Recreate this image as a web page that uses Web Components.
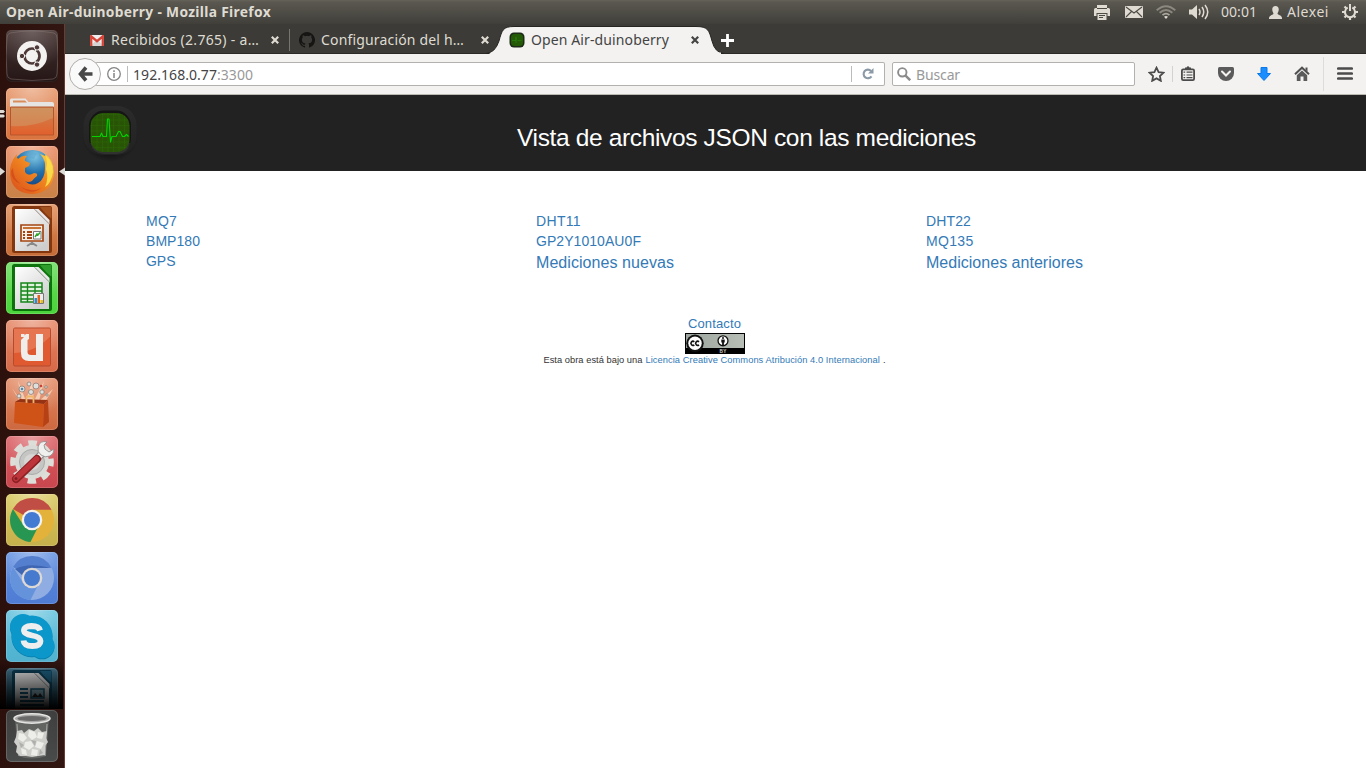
<!DOCTYPE html>
<html lang="es">
<head>
<meta charset="utf-8">
<title>Open Air-duinoberry</title>
<style>
html,body{margin:0;height:100%;overflow:hidden;background:#fff}
body{font-family:"Noto Sans","Open Sans",sans-serif}
</style>
</head>
<body>
<desk-top></desk-top>
<script>
const ICONS = {
printer:[20,20,`<g fill="#dfdbd2"><rect x="5" y="3" width="10" height="3"/><path d="M2 7.500q0-1.500 1.500-1.500h13q1.500 0 1.500 1.500v6.500h-2.500v-3h-11v3h-2.500z"/><path d="M5.500 12h9v6h-9z"/></g><path d="M5 6.500h10M7 13.500h6M7 15.500h4" stroke="#4a4943"/>`],
mail:[18,12,`<rect width="18" height="12" rx="1" fill="#dfdbd2"/><path d="M1 1l8 6 8-6M1 11l5.500-5.500M17 11l-5.500-5.500" fill="none" stroke="#4d4b45" stroke-width="1.100"/>`],
wifi:[20,16,`<g fill="none" stroke="#8b887f" stroke-width="1.800"><path d="M.7 6.300Q10-1.800 19.300 6.300"/><path d="M3.600 8.800Q10 3.200 16.400 8.800"/><path d="M6.500 11.200Q10 8 13.500 11.200" stroke="#aaa79d"/></g><path d="M8 12.800q2-1.500 4 0l-2 2.200z" fill="#dfdbd2"/>`],
sound:[20,16,`<path d="M0 5.500h3l5-4.500v14l-5-4.500h-3z" fill="#dfdbd2"/><g fill="none" stroke="#dfdbd2" stroke-width="1.500"><path d="M10 5q2 3 0 6M13 3q3.500 5 0 10M16 1q5.500 7 0 14"/></g>`],
user:[13,13,`<path d="M6.500 0c2.400 0 3.500 1.600 3.200 4-.2 1.800-.9 2.600-1.200 3.600 0 1.600 4.300 1.400 4.500 4.400v1h-13v-1c.2-3 4.500-2.800 4.500-4.400-.3-1-1-1.800-1.200-3.600-.3-2.400.8-4 3.200-4z" fill="#dfdbd2"/>`],
power:[16,16,`<g fill="none" stroke="#dfdbd2"><path d="M5.700 3.700a5 5 0 1 0 4.600 0" stroke-width="2"/><path d="M8 0v7" stroke-width="2"/><path d="M0 8h3M13 8h3M8 13v3M2.500 2.500l2 2M13.500 2.500l-2 2M2.500 13.500l2-2M13.500 13.500l-2-2" stroke-width="2.200"/></g>`],
gmail:[14,11,`<rect width="14" height="11" rx="1" fill="#eee"/><path d="M2 9.500l5-5 5 5v1.500h-10z" fill="#d5d5d5"/><path d="M1.200 11V1.300L7 6.200l5.800-4.900V11" fill="none" stroke="#d54437" stroke-width="2.300"/>`],
github:[16,16,`<path fill="#161514" d="M8 0a8 8 0 0 0-2.530 15.590c.4.070.55-.17.55-.38v-1.490c-2.230.490-2.700-.94-2.700-.94-.36-.92-.89-1.170-.89-1.170-.73-.5.050-.49.050-.49.800.060 1.230.830 1.230.830.710 1.220 1.870.870 2.330.660.070-.52.280-.87.510-1.070-1.780-.2-3.640-.89-3.640-3.950 0-.87.310-1.590.820-2.150-.08-.2-.36-1.020.080-2.120 0 0 .67-.21 2.200.820a7.600 7.600 0 0 1 4 0c1.530-1.040 2.200-.82 2.200-.82.440 1.100.160 1.920.080 2.120.510.560.820 1.270.820 2.150 0 3.070-1.870 3.750-3.650 3.950.290.250.540.730.540 1.480v2.190c0 .210.150.460.550.380A8 8 0 0 0 8 0z"/>`],
close:[8,8,`<path d="M.8.8l6.400 6.400M7.200.8L.8 7.200" stroke="currentColor" stroke-width="2.200"/>`],
plus:[13,13,`<path d="M6.500 0v13M0 6.500h13" stroke="#fff" stroke-width="2.800"/>`],
mini:[16,16,`<rect x=".5" y=".5" width="15" height="15" rx="4.500" fill="#1b2b17"/><rect x="2" y="2" width="12" height="12" rx="3.500" fill="#235a06"/><path d="M3 8.500h4V5v6M8.500 8.500h4" fill="none" stroke="#2a7d10" stroke-width=".8"/>`],
back:[15,16,`<path d="M8 1.500L2.500 8 8 14.500M3 8H14.500" fill="none" stroke="#484848" stroke-width="3.600"/>`],
info:[14,14,`<circle cx="7" cy="7" r="6.300" fill="none" stroke="#848484" stroke-width="1.300"/><path d="M7 6v5M7 3.300v1.600" stroke="#848484" stroke-width="1.500"/>`],
reload:[12,12,`<path d="M9.500 8.300A4.300 4.300 0 1 1 9 2.900" fill="none" stroke="#8b9aa6" stroke-width="2.100"/><path d="M11.500 0v5.500H6z" fill="#8b9aa6"/>`],
search:[14,14,`<circle cx="5.300" cy="5.300" r="4.200" fill="none" stroke="#8b8b8b" stroke-width="1.900"/><path d="M8.300 8.300l4.900 4.900" stroke="#8b8b8b" stroke-width="2.500"/>`],
star:[17,16,`<path d="M8.500 1.700l2.100 4.400 4.900.6-3.600 3.300.9 4.800-4.300-2.400-4.300 2.400.9-4.800-3.600-3.300 4.900-.6z" fill="none" stroke="#4b4b4b" stroke-width="1.800"/>`],
clip:[14,15,`<rect x=".9" y="3.400" width="12.200" height="10.700" rx="1.300" fill="none" stroke="#4b4b4b" stroke-width="1.800"/><path d="M4 3V1.500h1.500Q7-.8 8.500 1.500H10V3z" fill="#4b4b4b"/><path d="M2.500 6.200h1.700M5.500 6.200h6M2.500 9h1.700M5.500 9h6M2.500 11.700h1.700M5.500 11.700h6" stroke="#4b4b4b" stroke-width="1.200"/>`],
pocket:[16,14,`<path d="M1.500 0h13q1.500 0 1.500 1.500V6a8 8 0 0 1-16 0V1.500Q0 0 1.500 0z" fill="#5b5b5b"/><path d="M4 4.500l4 4 4-4" fill="none" stroke="#f4f3f1" stroke-width="2" stroke-linecap="round"/>`],
down:[14,14,`<path d="M4 .5h6v6h3.500L7 13.500.5 6.500H4z" fill="#1a8dff" stroke="#0b78e8"/>`],
home:[16,15,`<path d="M1 8.200L8 1.700l7 6.500" fill="none" stroke="#505050" stroke-width="2"/><path d="M11.500 1.500h2v4l-2-1.500z" fill="#505050"/><path d="M2.800 9.300L8 4.600l5.200 4.700V15H9.500v-4.500h-3V15H2.800z" fill="#5a5a5a"/>`],
menu:[16,13,`<path d="M1.300 1.500h13.400M1.300 6.500h13.400M1.300 11.500h13.400" stroke="#4b4b4b" stroke-width="2.700" stroke-linecap="round"/>`],
logo:[60,60,`<defs><linearGradient id="l" x2="0" y2="1"><stop stop-color="#2b2b2b"/><stop offset="1" stop-color="#222"/></linearGradient><radialGradient id="s"><stop offset=".65" stop-color="#131313"/><stop offset="1" stop-color="#222"/></radialGradient><pattern id="g" width="5.500" height="5.500" patternUnits="userSpaceOnUse"><path d="M0 .5h5.500M.5 0v5.500" stroke="#2d7206" stroke-width=".5" stroke-dasharray="1 .7"/></pattern></defs><ellipse cx="30" cy="34" rx="28" ry="25" fill="url(#s)"/><rect x="3.500" y="3" width="53" height="49" rx="19" fill="url(#l)"/><rect x="9" y="7.500" width="42" height="43" rx="15" fill="#151515"/><path d="M10 40q3 11 14 11h13q11 0 13-11" fill="#303230"/><rect x="10.500" y="10" width="39" height="39" rx="13" fill="#285505"/><rect x="10.500" y="10" width="39" height="39" rx="13" fill="url(#g)"/><path d="M12 33.500h8l1.500-3.500 1.500 3.500h3.500l1-17.500h1.500L30.500 39l1.500-5.500h4l2.500-5h1.500l2.500 5h2l2-2 2 2" fill="none" stroke="#04d300" stroke-width="1.100" stroke-linejoin="round"/>`],
cc:[60,21,`<defs><linearGradient id="c"><stop stop-color="#9ba49e"/><stop offset="1" stop-color="#b7beb5"/></linearGradient></defs><rect width="60" height="21" fill="#000"/><rect x="1" y="1" width="58" height="14" fill="url(#c)"/><circle cx="10" cy="10.300" r="8.700" fill="#111"/><circle cx="10" cy="10.300" r="6.700" fill="#fff"/><g fill="none" stroke="#111" stroke-width="1.600"><path d="M9.300 8.800a2 2 0 1 0 0 3M14 8.800a2 2 0 1 0 0 3"/></g><circle cx="38" cy="7.800" r="5.600" fill="#111"/><circle cx="38" cy="7.800" r="4.300" fill="#fff"/><circle cx="38" cy="5" r="1" fill="#111"/><path d="M36.300 6.400h3.400v3h-.8v2.500h-1.800V9.400h-.8z" fill="#111"/><text x="34.500" y="19.800" font-family="Liberation Sans" font-weight="bold" font-size="4.700" fill="#ccc" textLength="7">BY</text>`]
};
const DOC = (dark, mid, art) => `<path d="M8.500 2H44q2 0 2 2v43q0 2-2 2H8.500q-2.500 0-2.500-2V4.500Q6 2 8.500 2z" fill="${dark}"/><path d="M9 5h19L43 20v27H9z" fill="url(#paper)"/><path d="M34 3h11.500v11.500Q42 13 34 3z" fill="${mid}"/><path d="M28 5l15.500 15.500v-4.500L32.500 5z" fill="#e9e9e9"/><path d="M29 5.500l14 14" stroke="#888" stroke-width=".7"/>${art}`;
const APPS = {
dash:['#443331','#251716',`<path d="M4 3Q26-1 48 3q3 1 3 5 2 18 0 36 0 4-4 5-21 3-42 0-4-1-4-5-2-18 0-36 0-4 3-5z" fill="none" stroke="#8b7b78" stroke-opacity=".45"/><circle cx="26" cy="26" r="15" fill="#f3f2f1"/><circle cx="26" cy="26" r="7.500" fill="none" stroke="#4c3937" stroke-width="2.700" stroke-dasharray="14.500 1.200" stroke-dashoffset="7.200"/><g fill="#4c3937" stroke="#f3f2f1"><circle cx="16" cy="26" r="2.700"/><circle cx="31" cy="17.400" r="2.700"/><circle cx="31" cy="34.600" r="2.700"/></g>`],
files:['#e59263','#d9733f',`<path d="M4 12q0-1.500 1.500-1.500h14l3 3.500H46q2 0 2 2v4H4z" fill="#e6e5e3"/><path d="M7 12.500h12l2 2H7z" fill="#d98b5b"/><path d="M4.500 19h43v28h-43z" fill="url(#folder)" stroke="#b4562d"/><path d="M5 20h42v10Q25 40 5 38z" fill="#d0aa78" opacity=".4"/>`],
firefox:['#e98459','#c98348',`<circle cx="26.500" cy="25" r="21" fill="url(#globe)"/><path d="M23 7q5-2 8 1l-3 5-6-1zM33 8q5 2 7 8l-5-1z" fill="#5fa5cf" opacity=".6"/><path d="M38 7q10 7 10 19-1 21-22 22Q6 47 4 29 3 17 11 8q-1 3 1 5 4-4 9-3-3 3-2 5l5 2-1 3-4 2 0 4q3 5 9 1 4 0 3 3-3 2-5 5-4 2-7 0 6 6 13 2 7-4 7-15 1-8-5-14l5 2q1-1 0-3z" fill="url(#fox)"/><path d="M40 10q7 6 7 16-2 12-8 15 4-9 1-18l1-6z" fill="#f9df4d" opacity=".9"/><path d="M7 22q0 11 8 16-10-3-10-13zM15 41q10 6 20 1-9 8-20-1z" fill="#cb3f1a" opacity=".6"/>`],
impress:['#e18a54','#c56c38',DOC('#84370e','#a2511f',`<path d="M15 21h22v16H15z" fill="#f8eee5" stroke="#a34513" stroke-width="1.700"/><path d="M17 24h18" stroke="#c77335" stroke-width="2"/><path d="M21 28h5M21 31h5M21 34h5M17 28h2M17 31h2M17 34h2" stroke="#a34513" stroke-width="1.800"/><path d="M27.500 27.500h7.500v7.500h-7.500z" fill="#fff" stroke="#777"/><path d="M29 33l2-3 1 1 2-2.500" stroke="#32a52c" stroke-width="1.500" fill="none"/><path d="M26 38v3M21 42l5-3 5 3" stroke="#888" stroke-width="2" fill="none"/>`)],
calc:['#66dc58','#4bd43b',DOC('#0c720c','#2f9d2b',`<path d="M15 21h21v19H15z" fill="#e3f1df" stroke="#16851a" stroke-width="1.500"/><path d="M15 25h21M15 29h21M15 33h21M15 37h21M21.500 21v19M29 21v19" stroke="#16851a" stroke-width="1.400"/><path d="M27.500 31.500h10v10h-10z" fill="#eee" stroke="#777"/><path d="M28.500 36h2.500v5h-2.500z" fill="#278ed2"/><path d="M31.500 33h2.500v8h-2.500z" fill="#e1641a"/><path d="M34.500 38H37v3h-2.500z" fill="#e7c213"/>`)],
uone:['#e58361','#d66a48',`<rect x="7.500" y="8" width="37" height="38" rx="1.500" fill="#df5a30" stroke="#b44a2e"/><path d="M8 8.500h36v8Q30 32 8 33z" fill="#ef9a7d" opacity=".45"/><path d="M15 14h3.500v1.500L20 14h3v5l-1.500 1V32q0 3 3.500 3h5V14h7v27H23q-8 0-8-8V20l3-3h-3z" fill="#f0eeea"/>`],
soft:['#e28861','#cd6840',`<path d="M6 10l10 14L12 3l8 20L26 3l2 20L38 3l-5 20 14-12-8 13H14z" fill="#ffe9d6" opacity=".65"/><g fill="#dce1df" stroke="#8e7e75" stroke-width=".8"><circle cx="16" cy="11" r="3"/><circle cx="23" cy="6" r="2"/><circle cx="30" cy="8" r="3"/><circle cx="40" cy="9" r="1.300"/><circle cx="36" cy="14" r="2.200"/><circle cx="13" cy="18" r="2"/><circle cx="25" cy="14" r="2.500"/><circle cx="41" cy="17" r="1.200"/></g><circle cx="16" cy="11" r="1.300" fill="#5489aa"/><circle cx="35" cy="8" r="1.300" fill="#c84136"/><path d="M9 24l5-3 28 1-4 4z" fill="#953314"/><path d="M20.500 25v-5.500q0-1 1-1h5q1 0 1 1V25" fill="none" stroke="#f0b56a" stroke-width="1.800"/><path d="M9 24l29 2-1 23-29-4z" fill="#cf5217"/><path d="M38 26l4-4 1 22-6 5z" fill="#b64115"/>`],
settings:['#d95a5f','#c8474e',`<circle cx="26" cy="26" r="18.600" fill="none" stroke="#deded9" stroke-width="6.500" stroke-dasharray="8.300 6.309" stroke-dashoffset="4.150"/><circle cx="26" cy="26" r="17" fill="#dadad7"/><circle cx="26" cy="26" r="12.500" fill="#c5c5c3" stroke="#aaa"/><circle cx="26" cy="26" r="8" fill="#d6d6d4"/><path d="M30 24l9-10" stroke="#888" stroke-width="7.500"/><path d="M30 24l9-10" stroke="#f0f0ee" stroke-width="5.500"/><path d="M41 6q-7-2-9 5-1 5 3 8 4 3 9 1 4-2 4-7l-5 3-4-3-1-4z" fill="#f0f0ee" stroke="#888" stroke-width=".8"/><path d="M10 43L31 23" stroke="#8f2024" stroke-width="8" stroke-linecap="round"/><path d="M10 42.500L30.500 23" stroke="#bd353a" stroke-width="5.500" stroke-linecap="round"/><circle cx="10" cy="42.500" r="1.500" fill="#7d2024"/>`],
chrome:['#d8c557','#c6b04d',`<circle cx="26" cy="26" r="22" fill="#e2b23b"/><path d="M26 26L7 15A22 22 0 0 1 45.500 15.800H26z" fill="#c14e45"/><path d="M26 26l7 5-8.500 17A22 22 0 0 1 7 15l9 14z" fill="#289653"/><circle cx="26" cy="26" r="10.300" fill="#f4f2ed"/><circle cx="26" cy="26" r="8" fill="#437bd3"/>`],
chromium:['#5f8ee0','#4f7bd4',`<circle cx="26" cy="26" r="22" fill="#8fade2"/><path d="M26 26L7 15A22 22 0 0 1 45.500 15.800H26z" fill="#547fcf"/><path d="M9 17q14-7 36-1H26L16 23z" fill="#3f66b2"/><path d="M26 26l7 5-8.500 17A22 22 0 0 1 7 15l9 14z" fill="#6493dc"/><circle cx="26" cy="26" r="10.300" fill="#ded9d4"/><circle cx="26" cy="26" r="8" fill="#467ace"/>`],
skype:['#5fc0dc','#51b2d0',`<g fill="#087eaa" transform="translate(0 .8)"><circle cx="26" cy="26" r="20.500"/><circle cx="17" cy="17" r="13"/><circle cx="36" cy="36" r="12.500"/></g><g fill="#0c97cb"><circle cx="26" cy="26" r="20.500"/><circle cx="17" cy="17" r="13"/><circle cx="36" cy="36" r="12.500"/></g><path d="M34 20.500q-1-4.500-8.500-4.500-8 .3-7.500 5 .3 3 8 4.500 8.500 1.500 8.500 5.500 0 5-8 5-8.500 0-9-5.500" fill="none" stroke="#eee" stroke-width="5.800"/>`],
writer:['#397692','#12303d',DOC('#0d435c','#206a8d',`<path d="M14 21h8M14 25h8M14 29h8M14 33h24M14 37h24" stroke="#165d7c" stroke-width="2"/><path d="M25 21h13v9H25z" fill="#8eb9c5" stroke="#165d7c" stroke-width="1.500"/><path d="M26 29l3-4 3 3 2-3 3 4z" fill="#222"/>`)],
trash:['#393a39','#4a4c4b',`<path d="M9 9l3 37q14 5 28 0l3-37z" fill="#777976" opacity=".6"/><path d="M11 14l2 32M41 14l-2 32" stroke="#b9bab7" stroke-width=".8"/><path d="M11 21l5-1 2 3 5-4 5 2 4-3 4 4 5-1-1 7 2 4-3 4 0 9-7 1-6 1-6-1-6 0-4-4 1-6-3-4 2-5z" fill="#cecfcb"/><g fill="#ededea"><path d="M13 23l5 1 3 4-4 4-5-3zM23 20l6 2 2 5-5 3-4-4zM32 22l6 1-2 6-5-1zM19 32l6-1 3 5-5 4-5-3zM31 31l7 2-3 6-6-2zM15 38l5 2 1 5-5-1zM26 39l6 1-1 6-6-1z"/></g><path d="M13 32l5 3-3 3zM25 30l5 1-1 5zM34 39l3 4-4 2z" fill="#999a97" opacity=".6"/><ellipse cx="26" cy="8.500" rx="18" ry="4.700" fill="#a9aaa8" stroke="#e4e4e2" stroke-width="1.500"/><ellipse cx="26" cy="8.500" rx="14.500" ry="2.500" fill="#686968"/>`]
};
const SHINE = {dash:.45, trash:.1, writer:.4};
const define = (name, html, after) => customElements.define(name, class extends HTMLElement{
  constructor(){super();this.attachShadow({mode:'open'})}
  connectedCallback(){ if(this.ready) return; this.ready=true; this.shadowRoot.innerHTML = typeof html==='function'?html(this):html; if(after) after(this); }
});

define('ui-icon', e => { const [w,h,s]=ICONS[e.getAttribute('name')]; return `<style>:host{display:block;flex:none;width:${w}px;height:${h}px}svg{display:block}</style><svg width="${w}" height="${h}" viewBox="0 0 ${w} ${h}">${s}</svg>`});

define('app-tile', e => { const n=e.getAttribute('name'), [a,b,s]=APPS[n]; return `<style>:host{display:block;flex:none;width:52px;height:52px}svg{display:block}</style><svg width="52" height="52" viewBox="0 0 52 52"><defs>
<linearGradient id="bg" x2="0" y2="1"><stop stop-color="${a}"/><stop offset="1" stop-color="${b}"/></linearGradient>
<radialGradient id="shine" cx=".5" cy="0" r=".75"><stop stop-color="#fff" stop-opacity=".5"/><stop offset="1" stop-color="#fff" stop-opacity="0"/></radialGradient>
<linearGradient id="paper" x2=".7" y2="1"><stop stop-color="#fff"/><stop offset="1" stop-color="#cecece"/></linearGradient>
<linearGradient id="folder" x2="0" y2="1"><stop stop-color="#cd8450"/><stop offset="1" stop-color="#e2602c"/></linearGradient>
<radialGradient id="globe" cx=".55" cy=".15" r=".8"><stop stop-color="#82c8e5"/><stop offset=".5" stop-color="#216faa"/><stop offset="1" stop-color="#123b78"/></radialGradient>
<linearGradient id="fox" x1="1" x2="0" y2="1"><stop stop-color="#ffe64c"/><stop offset=".4" stop-color="#f28b20"/><stop offset="1" stop-color="#d84b1b"/></linearGradient>
</defs><rect width="52" height="52" rx="5" fill="url(#bg)"/><rect width="52" height="52" rx="5" fill="url(#shine)" opacity="${SHINE[n]??.8}"/><rect x=".5" y=".5" width="51" height="51" rx="5" fill="none" stroke="#fff" stroke-opacity="${n==='dash'?.04:.16}"/>${s}</svg>`});

define('unity-launcher', `<style>
:host{display:flex;flex-direction:column;width:65px;flex:none;box-sizing:border-box;background:linear-gradient(90deg,#2b100c,#321612);border-right:1px solid #6b3c33;position:relative}
.apps{height:679px;padding:6px 0 0 6px;display:flex;flex-direction:column;gap:6px;overflow:hidden;position:relative}
.apps:after{content:"";position:absolute;left:0;top:636px;width:63px;height:49px;background:linear-gradient(#0000,#0005 25%,#000b 75%,#000)}
.trash{padding:1px 0 0 6px}
.marks{position:absolute;left:0;top:0;width:65px;height:200px}
</style><div class="apps">${['dash','files','firefox','impress','calc','uone','soft','settings','chrome','chromium','skype','writer'].map(n=>`<app-tile name="${n}"></app-tile>`).join('')}</div><div class="trash"><app-tile name="trash"></app-tile></div>
<svg class="marks" width="65" height="200" viewBox="0 0 65 200"><path d="M0 86h3.500l1.500 1.500-1.500 1.500H0zM0 90.500h3.500L5 92l-1.500 1.500H0zM0 143.500l5 4-5 4zM65 143.500l-6 4 6 4z" fill="#dedbd6"/></svg>`);

define('top-panel', `<style>
:host{display:flex;height:24px;flex:none;align-items:center;box-sizing:border-box;padding:0 8px 0 6px;background:linear-gradient(#66645a 0,#5a5850 2px,#403f3a 100%);color:#dfdbd2;font-size:14px;line-height:24px}
.t{font-weight:700;font-size:13.800px;flex:1}.r{display:flex;align-items:center}
</style><span class="t"><fit-text w="265">Open Air-duinoberry - Mozilla Firefox</fit-text></span><div class="r">
<ui-icon name="printer" style="margin-right:13px"></ui-icon><ui-icon name="mail" style="margin-right:13px"></ui-icon><ui-icon name="wifi" style="margin-right:13px"></ui-icon><ui-icon name="sound" style="margin-right:12px"></ui-icon>
<fit-text w="36" style="margin-right:12px">00:01</fit-text><ui-icon name="user" style="margin-right:5px"></ui-icon><fit-text w="42" style="margin-right:13px">Alexei</fit-text><ui-icon name="power"></ui-icon></div>`);

define('tab-strip', `<style>
:host{display:flex;height:30px;flex:none;background:#3c3b37;color:#dfdbd2;font-size:14px;align-items:center;box-shadow:inset 0 -1px #2b2a27;box-sizing:border-box}
.tab{display:flex;align-items:center;height:30px;padding-top:2px;box-sizing:border-box}
.tab fit-text{margin-top:-2px}
.a{width:225px;padding-left:25px;background:linear-gradient(#77756e,#77756e) right 5px/1px 22px no-repeat}
.b{width:199px;padding-left:9px}
.c{width:232px;padding-left:20px;color:#444;position:relative}
.shape{position:absolute;left:-6px;top:0}
.c>:not(.shape){position:relative}
ui-icon[name=plus]{margin:3px 0 0 0}
</style>
<div class="tab a"><ui-icon name="gmail" style="margin-right:7px"></ui-icon><fit-text w="148">Recibidos (2.765) - a…</fit-text><ui-icon name="close" style="margin-left:12px"></ui-icon></div>
<div class="tab b"><ui-icon name="github" style="margin-right:6px"></ui-icon><fit-text w="143">Configuración del h…</fit-text><ui-icon name="close" style="margin-left:17px"></ui-icon></div>
<div class="tab c"><svg class="shape" width="242" height="30" viewBox="0 0 242 30"><path d="M3 29.500Q12 29 16 17C19 6 20 2.500 31 2.500H213C225 2.500 226 6 229 17Q232 29 241 29.500z" fill="#f3f2f1" stroke="#262522"/><path d="M6 30h232v-1.500H8z" fill="#f3f2f1"/></svg><ui-icon name="mini" style="margin-right:6px"></ui-icon><fit-text w="138">Open Air-duinoberry</fit-text><ui-icon name="close" style="margin-left:22px"></ui-icon></div>
<ui-icon name="plus"></ui-icon>`);

define('nav-bar', `<style>
:host{display:flex;height:41px;flex:none;box-sizing:border-box;background:#f3f2f1;border-bottom:1px solid #bbb9b4;align-items:center;font-size:14px;padding-left:4px}
.back{width:32px;height:32px;box-sizing:border-box;border:1px solid #b0aeaa;border-radius:50%;background:#fafafa;display:flex;align-items:center;justify-content:center;position:relative;z-index:1;flex:none}
.url,.find{height:24px;box-sizing:border-box;border:1px solid #b3b1ad;border-radius:2px;background:#fff;display:flex;align-items:center}
.url{width:790px;margin-left:-6px;padding-left:12px;color:#444;border-left:0}
.sep{width:1px;height:16px;background:#bbb}
.port{color:#999}.find{width:243px;margin-left:7px;padding-left:4px;color:#999}
.tools{display:flex;align-items:center;flex:1;align-self:stretch;padding:0 0 1px 13px}
</style><div class="back"><ui-icon name="back"></ui-icon></div>
<div class="url"><ui-icon name="info"></ui-icon><i class="sep" style="margin:0 5px 0 6px"></i><fit-text w="84">192.168.0.77</fit-text><fit-text class="port" w="36">:3300</fit-text><i class="sep" style="margin-left:auto;margin-right:10px"></i><ui-icon name="reload" style="margin-right:10px"></ui-icon></div>
<div class="find"><ui-icon name="search" style="margin-right:5px"></ui-icon><fit-text w="44">Buscar</fit-text></div>
<div class="tools"><ui-icon name="star"></ui-icon><i class="sep" style="margin:0 8px 0 7px;background:#d4d2ce"></i><ui-icon name="clip"></ui-icon><ui-icon name="pocket" style="margin-left:23px"></ui-icon><ui-icon name="down" style="margin-left:23px"></ui-icon><ui-icon name="home" style="margin-left:23px"></ui-icon><i class="sep" style="height:34px;margin:0 13px;background:#dedcd9"></i><ui-icon name="menu"></ui-icon></div>`);

define('page-header', `<style>
:host{display:flex;height:76px;flex:none;background:#222;align-items:center;color:#fff;font:24.500px "Liberation Sans",Arial,sans-serif}
h1{font:inherit;line-height:28px;margin:9px 13px 0 0;flex:1;text-align:center}
ui-icon{margin-left:15px}
</style><ui-icon name="logo"></ui-icon><h1><slot></slot></h1>`);

define('link-column', `<style>
:host{display:flex;flex-direction:column;width:390px;flex:none;line-height:20px}
</style><slot></slot>`);

define('page-footer', `<style>
:host{display:flex;flex-direction:column;align-items:center;margin:41px 2px 0 0;font-size:13px;line-height:18px;color:#333}
a{color:#337ab7}.lic{font-size:9.300px;line-height:12px;display:flex;gap:3px}
</style><a><fit-text w="53">Contacto</fit-text></a><ui-icon name="cc"></ui-icon><div class="lic"><span><fit-text w="99">Esta obra está bajo una</fit-text></span><a><fit-text w="234.500">Licencia Creative Commons Atribución 4.0 Internacional</fit-text></a><span>.</span></div>`);

define('web-page', `<style>
:host{display:block;flex:1;background:#fff;font:14px "Liberation Sans",Arial,sans-serif;color:#333}
.cols{display:flex;padding:40px 0 0 81px}
a{color:#337ab7}.big{font-size:16px;line-height:23px}
</style><page-header><fit-text w="459">Vista de archivos JSON con las mediciones</fit-text></page-header>
<div class="cols"><link-column><a><fit-text w="31">MQ7</fit-text></a><a><fit-text w="54">BMP180</fit-text></a><a><fit-text w="29.500">GPS</fit-text></a></link-column>
<link-column><a><fit-text w="45">DHT11</fit-text></a><a><fit-text w="105">GP2Y1010AU0F</fit-text></a><a class="big"><fit-text w="138">Mediciones nuevas</fit-text></a></link-column>
<link-column><a><fit-text w="45">DHT22</fit-text></a><a><fit-text w="47.500">MQ135</fit-text></a><a class="big"><fit-text w="157">Mediciones anteriores</fit-text></a></link-column></div>
<page-footer></page-footer>`);

define('desk-top', `<style>
:host{display:flex;flex-direction:column;width:1366px;height:768px;overflow:hidden}
.body{display:flex;flex:1;min-height:0}.win{display:flex;flex-direction:column;flex:1;min-width:0}
</style><top-panel></top-panel><div class="body"><unity-launcher></unity-launcher><div class="win"><tab-strip></tab-strip><nav-bar></nav-bar><web-page></web-page></div></div>`);

/* Spreads a single-line label over its given width. */
define('fit-text', `<style>:host{display:inline-block;white-space:nowrap;flex:none}span{display:inline-block}</style><span><slot></slot></span>`, e => {
  const s=e.shadowRoot.querySelector('span'), w=+e.getAttribute('w'), n=s.getBoundingClientRect().width;
  s.style.letterSpacing=((w-n)/e.textContent.length)+'px';
  e.style.width=w+'px';
});
</script>
</body>
</html>
